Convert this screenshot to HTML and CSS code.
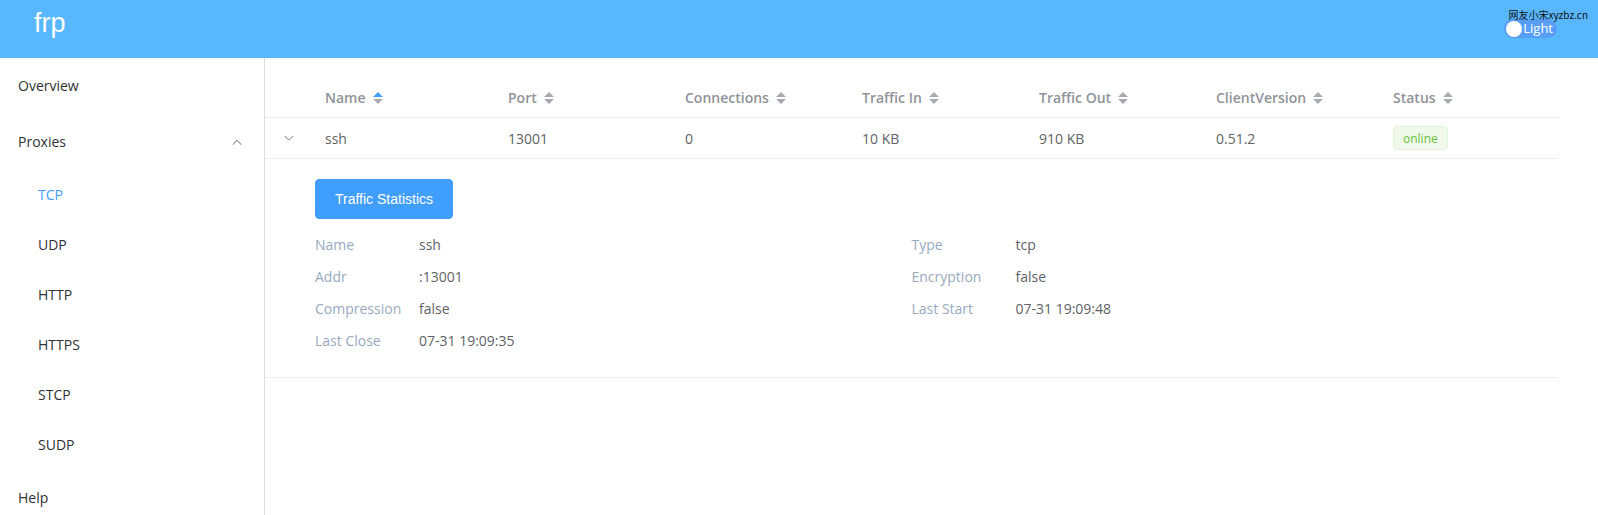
FILE: index.html
```html
<!DOCTYPE html>
<html>
<head>
    <title>frp dashboard</title>
    <link rel="stylesheet" href="styles.css">
</head>
<body>
    <header class="topbar">
        <a class="brand" href="#">frp</a>
        <div class="theme-switch">
            <span class="switch">
                <span class="switch-dot"></span>
                <span class="switch-text">Light</span>
            </span>
        </div>
        <span class="watermark">网友小宋xyzbz.cn</span>
    </header>

    <section class="layout">
        <nav class="side-nav">
            <ul class="menu">
                <li class="menu-item">Overview</li>
                <li class="submenu">
                    <div class="submenu-title">
                        <span>Proxies</span>
                        <svg class="arrow" viewBox="0 0 1024 1024"><path d="M488.832 344.32l-339.84 356.672a32 32 0 0 0 0 44.16l.384.384a29.44 29.440 0 0 0 42.688 0l320-335.872 319.872 335.872a29.44 29.44 0 0 0 42.688 0l.384-.384a32 32 0 0 0 0-44.16L535.168 344.32a32 32 0 0 0-46.336 0z"/></svg>
                    </div>
                    <ul class="menu-inline">
                        <li class="menu-item sub active">TCP</li>
                        <li class="menu-item sub">UDP</li>
                        <li class="menu-item sub">HTTP</li>
                        <li class="menu-item sub">HTTPS</li>
                        <li class="menu-item sub">STCP</li>
                        <li class="menu-item sub">SUDP</li>
                    </ul>
                </li>
                <li class="menu-item">Help</li>
            </ul>
        </nav>

        <main class="content">
            <table class="proxy-table">
                <colgroup>
                    <col class="col-expand">
                    <col class="col-name">
                    <col><col><col><col><col><col>
                </colgroup>
                <thead>
                    <tr>
                        <th></th>
                        <th><div class="cell">Name <span class="caret"><i class="up on"></i><i class="down"></i></span></div></th>
                        <th><div class="cell">Port <span class="caret"><i class="up"></i><i class="down"></i></span></div></th>
                        <th><div class="cell">Connections <span class="caret"><i class="up"></i><i class="down"></i></span></div></th>
                        <th><div class="cell">Traffic In <span class="caret"><i class="up"></i><i class="down"></i></span></div></th>
                        <th><div class="cell">Traffic Out <span class="caret"><i class="up"></i><i class="down"></i></span></div></th>
                        <th><div class="cell">ClientVersion <span class="caret"><i class="up"></i><i class="down"></i></span></div></th>
                        <th><div class="cell">Status <span class="caret"><i class="up"></i><i class="down"></i></span></div></th>
                    </tr>
                </thead>
                <tbody>
                    <tr>
                        <td class="expand-cell">
                            <svg class="expand-icon" viewBox="0 0 1024 1024"><path d="M831.872 340.864 512 652.672 192.128 340.864a30.592 30.592 0 0 0-42.752 0 29.12 29.12 0 0 0 0 41.6L489.664 714.24a32 32 0 0 0 44.672 0l340.288-331.712a29.12 29.12 0 0 0 0-41.728 30.592 30.592 0 0 0-42.752 0z"/></svg>
                        </td>
                        <td><div class="cell">ssh</div></td>
                        <td><div class="cell">13001</div></td>
                        <td><div class="cell">0</div></td>
                        <td><div class="cell">10 KB</div></td>
                        <td><div class="cell">910 KB</div></td>
                        <td><div class="cell">0.51.2</div></td>
                        <td><div class="cell"><span class="tag">online</span></div></td>
                    </tr>
                    <tr class="expanded">
                        <td colspan="8">
                            <button class="btn-primary">Traffic Statistics</button>
                            <div class="detail-form">
                                <div class="form-item"><label>Name</label><span>ssh</span></div>
                                <div class="form-item"><label>Type</label><span>tcp</span></div>
                                <div class="form-item"><label>Addr</label><span>:13001</span></div>
                                <div class="form-item"><label>Encryption</label><span>false</span></div>
                                <div class="form-item"><label>Compression</label><span>false</span></div>
                                <div class="form-item"><label>Last Start</label><span>07-31 19:09:48</span></div>
                                <div class="form-item"><label>Last Close</label><span>07-31 19:09:35</span></div>
                            </div>
                        </td>
                    </tr>
                </tbody>
            </table>
        </main>
    </section>
</body>
</html>
```

FILE: styles.css
```css
body {
    margin: 0;
    font-family: "Open Sans", "Noto Sans CJK SC", sans-serif;
    font-size: 14px;
    color: #303133;
    background: #fff;
}

.topbar {
    position: relative;
    height: 58px;
    background: #58b7ff;
    display: flex;
    align-items: flex-start;
}

.brand {
    font-family: "Liberation Sans", Arial, sans-serif;
    color: #fff;
    font-size: 27px;
    line-height: 27px;
    text-decoration: none;
    margin: 10px 0 0 34px;
}

.theme-switch {
    flex-grow: 1;
    display: flex;
    justify-content: flex-end;
    padding-right: 41px;
    padding-top: 19px;
}

.switch {
    display: inline-flex;
    align-items: center;
    height: 19px;
    padding: 0 4px 0 2px;
    border-radius: 10px;
    background: #589ef8;
    gap: 1px;
}

.switch-dot {
    width: 16px;
    height: 16px;
    border-radius: 50%;
    background: #fff;
}

.switch-text {
    color: #fff;
    font-size: 13px;
    line-height: 19px;
}

.watermark {
    position: absolute;
    top: 10px;
    right: 10px;
    font-family: "Noto Sans CJK SC", sans-serif;
    font-size: 10px;
    line-height: 10px;
    color: #111;
}

.layout {
    display: flex;
    min-height: calc(100vh - 58px);
}

.side-nav {
    width: 264px;
    flex-shrink: 0;
    border-right: 1px solid #dcdfe6;
}

.menu,
.menu-inline {
    list-style: none;
    margin: 0;
    padding: 0;
}

.menu-item,
.submenu-title {
    height: 56px;
    line-height: 56px;
    padding: 0 20px 0 18px;
    color: #303133;
}

.submenu-title {
    display: flex;
    align-items: center;
    justify-content: space-between;
}

.submenu-title .arrow {
    width: 12px;
    height: 12px;
    fill: #606266;
    margin-right: 1px;
}

.menu-item.sub {
    height: 50px;
    line-height: 50px;
    padding-left: 38px;
}

.menu-item.active {
    color: #409eff;
}

.content {
    flex: 1;
    margin-top: 20px;
    padding-right: 40px;
}

.proxy-table {
    width: 100%;
    table-layout: fixed;
    border-collapse: collapse;
    color: #606266;
}

.col-expand {
    width: 48px;
}

.col-name {
    width: 183px;
}

.proxy-table th,
.proxy-table td {
    padding: 8px 0;
    border-bottom: 1px solid #ebeef5;
    text-align: left;
    vertical-align: middle;
}

.proxy-table th {
    color: #909399;
    font-weight: 600;
}

.cell {
    padding: 0 12px;
    line-height: 23px;
    display: flex;
    align-items: center;
}

.caret {
    display: inline-flex;
    flex-direction: column;
    align-items: center;
    gap: 2px;
    width: 24px;
    height: 14px;
    margin-top: 2px;
}

.caret i {
    width: 0;
    height: 0;
    border-left: 5px solid transparent;
    border-right: 5px solid transparent;
}

.caret .up {
    border-bottom: 5px solid #a8abb2;
}

.caret .up.on {
    border-bottom-color: #409eff;
}

.caret .down {
    border-top: 5px solid #a8abb2;
}

.expand-cell {
    text-align: center !important;
}

.expand-icon {
    display: block;
    margin: 0 auto;
    width: 12px;
    height: 12px;
    fill: #606266;
}

.tag {
    display: inline-flex;
    align-items: center;
    height: 22px;
    padding: 0 9px;
    font-size: 12px;
    color: #67c23a;
    background: #f0f9eb;
    border: 1px solid #e1f3d8;
    border-radius: 4px;
}

.proxy-table .expanded td {
    padding: 20px 50px;
}

.btn-primary {
    font-family: "Liberation Sans", Arial, sans-serif;
    font-size: 14px;
    height: 40px;
    padding: 0 19px;
    color: #fff;
    background: #409eff;
    border: 1px solid #409eff;
    border-radius: 4px;
}

.detail-form {
    display: grid;
    grid-template-columns: 1fr 1fr;
    margin-top: 10px;
}

.form-item {
    display: flex;
    line-height: 32px;
}

.form-item label {
    width: 92px;
    padding-right: 12px;
    color: #99a9bf;
}

.form-item span {
    color: #606266;
}
```
